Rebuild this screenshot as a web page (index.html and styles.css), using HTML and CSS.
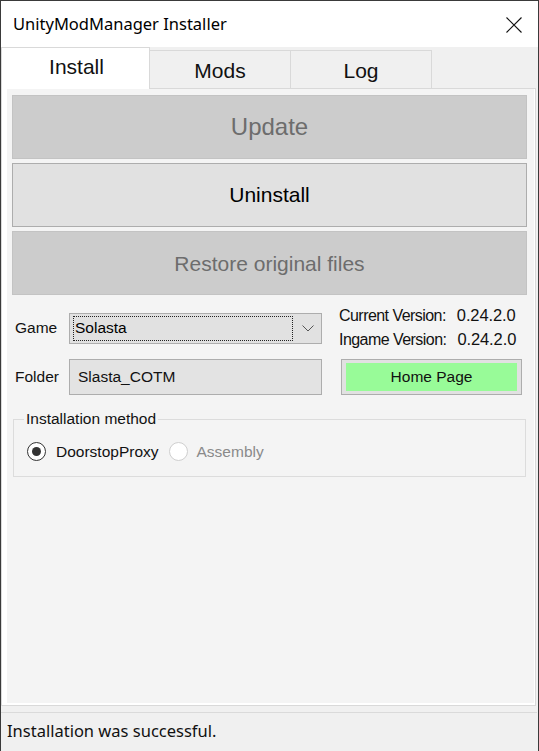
FILE: index.html
```html
<!DOCTYPE html>
<html>
<head>
<meta charset="utf-8">
<link rel="stylesheet" href="styles.css">
</head>
<body>
<div class="window">
  <div class="titlebar">
    <span class="title">UnityModManager Installer</span>
    <svg class="close" width="16" height="16" viewBox="0 0 16 16"><path d="M0.5 0.5 L15.5 15.5 M15.5 0.5 L0.5 15.5" stroke="#111" stroke-width="1.1" fill="none"/></svg>
  </div>
  <div class="tabs">
    <div class="tab active">Install</div>
    <div class="tab">Mods</div>
    <div class="tab">Log</div>
  </div>
  <div class="page">
    <div class="panel">
      <div class="btn disabled big">Update</div>
      <div class="btn normal">Uninstall</div>
      <div class="btn disabled mid">Restore original files</div>

      <div class="row row1">
        <span class="label">Game</span>
        <div class="combo">
          <span class="focus">Solasta</span>
          <svg class="chev" width="12" height="7" viewBox="0 0 12 7"><path d="M0.5 0.5 L6 6 L11.5 0.5" stroke="#555" stroke-width="1" fill="none"/></svg>
        </div>
        <div class="versions">
          <div class="ver"><span class="vk">Current Version:</span><span class="vv">0.24.2.0</span></div>
          <div class="ver"><span class="vk">Ingame Version:</span><span class="vv">0.24.2.0</span></div>
        </div>
      </div>

      <div class="row row2">
        <span class="label">Folder</span>
        <div class="textbox">Slasta_COTM</div>
        <div class="home"><div class="home-inner">Home Page</div></div>
      </div>

      <fieldset class="group">
        <legend>Installation method</legend>
        <div class="radios">
          <span class="radio checked"></span><span class="rlabel">DoorstopProxy</span>
          <span class="radio"></span><span class="rlabel dim">Assembly</span>
        </div>
      </fieldset>
    </div>
  </div>
  <div class="status">Installation was successful.</div>
</div>
</body>
</html>
```

FILE: styles.css
```css
* { box-sizing: border-box; }
html, body { margin: 0; padding: 0; }
body { width: 539px; height: 751px; overflow: hidden; background: #f0f0f0; }

.window {
  width: 539px;
  height: 751px;
  border: 1px solid #3a3a3a;
  border-bottom: none;
  background: #f0f0f0;
  display: flex;
  flex-direction: column;
  font-family: "Liberation Sans", Arial, sans-serif;
  color: #000;
}

.titlebar {
  height: 46px;
  background: #fff;
  display: flex;
  align-items: center;
  justify-content: space-between;
  padding: 0 16px 0 12px;
  flex: none;
}
.title {
  font-family: "Noto Sans", "Open Sans", sans-serif;
  font-size: 16.5px;
  color: #000;
  margin-top: -1px;
}
.close { display: block; margin-top: 1px; }

.tabs {
  height: 41px;
  display: flex;
  align-items: flex-end;
  flex: none;
  position: relative;
  z-index: 1;
}
.tab {
  height: 38px;
  width: 141px;
  border: 1px solid #d9d9d9;
  border-bottom: none;
  border-left: none;
  background: #f0f0f0;
  font-size: 21px;
  display: flex;
  align-items: center;
  justify-content: center;
  padding-top: 2px;
  color: #111;
}
.tab.active {
  height: 42px;
  width: 149px;
  margin-bottom: -1px;
  background: #fff;
  border-left: 1px solid #d9d9d9;
  border-right: 1px solid #d9d9d9;
  padding-top: 0;
  padding-bottom: 3px;
  padding-left: 2px;
}

.page {
  height: 618px;
  width: 535px;
  border: 1px solid #d9d9d9;
  background: #fff;
  padding: 0 1px 2px 5px;
  flex: none;
}
.panel {
  height: 100%;
  background: #f4f4f4;
  padding: 6px 7px 0 5px;
  display: flex;
  flex-direction: column;
}

.btn {
  height: 64px;
  display: flex;
  align-items: center;
  justify-content: center;
  border: 1px solid #c3c3c3;
  background: #cccccc;
  color: #6d6d6d;
  flex: none;
}
.btn + .btn { margin-top: 4px; }
.btn.big { font-size: 24px; }
.btn.mid { font-size: 21px; padding-top: 2px; }
.btn.normal {
  background: #e1e1e1;
  border-color: #adadad;
  color: #000;
  font-size: 21px;
}

.row {
  display: flex;
  align-items: center;
  flex: none;
}
.row1 { margin-top: 12px; height: 42px; }
.row2 { margin-top: 10px; height: 36px; }
.label {
  width: 57px;
  padding-left: 3px;
  font-size: 15.5px;
  color: #111;
  flex: none;
}
.combo {
  width: 253px;
  height: 31px;
  border: 1px solid #adadad;
  background: #e1e1e1;
  display: flex;
  align-items: center;
  padding: 0 7px 0 3px;
  justify-content: space-between;
  flex: none;
}
.focus {
  width: 220px;
  height: 25px;
  border: 1px dotted #222;
  font-size: 15.5px;
  display: flex;
  align-items: center;
  padding-left: 1px;
}
.chev { display: block; margin-top: 1px; }

.versions {
  margin-left: 17px;
  display: flex;
  flex-direction: column;
  gap: 5px;
  margin-top: -2px;
}
.ver {
  display: flex;
  align-items: baseline;
  gap: 11px;
  line-height: 18px;
  color: #111;
}
.vk { font-size: 16px; letter-spacing: -0.55px; }
.vv { font-size: 16.5px; letter-spacing: -0.1px; }

.textbox {
  width: 253px;
  height: 36px;
  border: 1px solid #adadad;
  background: #e3e3e3;
  display: flex;
  align-items: center;
  padding-left: 8px;
  font-size: 15.5px;
  flex: none;
  color: #111;
}
.home {
  margin-left: 19px;
  width: 181px;
  height: 36px;
  border: 1px solid #adadad;
  background: #e1e1e1;
  padding: 3px 4px;
  flex: none;
}
.home-inner {
  height: 100%;
  background: #98fb98;
  display: flex;
  align-items: center;
  justify-content: center;
  font-size: 15.5px;
  color: #111;
}

.group {
  margin: 15px 0 0 1px;
  width: 513px;
  height: 67px;
  border: 1px solid #dcdcdc;
  padding: 0 0 0 12px;
  flex: none;
}
.group legend {
  font-size: 15.5px;
  padding: 0 2px;
  margin-left: -2px;
  color: #111;
}
.radios {
  display: flex;
  align-items: center;
  margin-top: 14px;
  margin-left: 1px;
}
.radio {
  width: 19px;
  height: 19px;
  border-radius: 50%;
  border: 1px solid #cfcfcf;
  background: #fff;
  flex: none;
  position: relative;
}
.radio.checked { border: 1px solid #333; }
.radio.checked::after {
  content: "";
  position: absolute;
  left: 4px; top: 4px;
  width: 9px; height: 9px;
  border-radius: 50%;
  background: #333;
}
.rlabel { font-size: 15.5px; margin-left: 10px; margin-right: 10px; color: #111; }
.rlabel.dim { color: #8a8a8a; margin-left: 9px; }

.status {
  flex: none;
  margin-top: 6px;
  border-top: 1px solid #dadada;
  width: 536px;
  padding: 6px 0 0 6px;
  font-family: "Noto Sans", "Open Sans", sans-serif;
  font-size: 16.5px;
  color: #111;
}
```
